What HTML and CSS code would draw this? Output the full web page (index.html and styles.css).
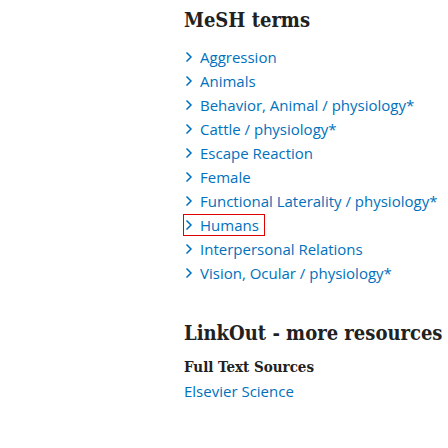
FILE: index.html
```html
<!DOCTYPE html>
<html>
<head>
<meta charset="utf-8">
<link rel="stylesheet" href="styles.css">
</head>
<body>
<div class="page">
  <section class="mesh">
    <h2 class="heading">MeSH terms</h2>
    <ul class="terms">
      <li class="term"><span class="chev"><svg width="8" height="12" viewBox="0 0 8 12"><path d="M1.5 1.5 L6 6 L1.5 10.5" fill="none" stroke="#0071bc" stroke-width="1.5"/></svg></span><a class="link">Aggression</a></li>
      <li class="term"><span class="chev"><svg width="8" height="12" viewBox="0 0 8 12"><path d="M1.5 1.5 L6 6 L1.5 10.5" fill="none" stroke="#0071bc" stroke-width="1.5"/></svg></span><a class="link">Animals</a></li>
      <li class="term"><span class="chev"><svg width="8" height="12" viewBox="0 0 8 12"><path d="M1.5 1.5 L6 6 L1.5 10.5" fill="none" stroke="#0071bc" stroke-width="1.5"/></svg></span><a class="link">Behavior, Animal / physiology*</a></li>
      <li class="term"><span class="chev"><svg width="8" height="12" viewBox="0 0 8 12"><path d="M1.5 1.5 L6 6 L1.5 10.5" fill="none" stroke="#0071bc" stroke-width="1.5"/></svg></span><a class="link">Cattle / physiology*</a></li>
      <li class="term"><span class="chev"><svg width="8" height="12" viewBox="0 0 8 12"><path d="M1.5 1.5 L6 6 L1.5 10.5" fill="none" stroke="#0071bc" stroke-width="1.5"/></svg></span><a class="link">Escape Reaction</a></li>
      <li class="term"><span class="chev"><svg width="8" height="12" viewBox="0 0 8 12"><path d="M1.5 1.5 L6 6 L1.5 10.5" fill="none" stroke="#0071bc" stroke-width="1.5"/></svg></span><a class="link">Female</a></li>
      <li class="term"><span class="chev"><svg width="8" height="12" viewBox="0 0 8 12"><path d="M1.5 1.5 L6 6 L1.5 10.5" fill="none" stroke="#0071bc" stroke-width="1.5"/></svg></span><a class="link">Functional Laterality / physiology*</a></li>
      <li class="term focused"><span class="chev"><svg width="8" height="12" viewBox="0 0 8 12"><path d="M1.5 1.5 L6 6 L1.5 10.5" fill="none" stroke="#0071bc" stroke-width="1.5"/></svg></span><a class="link">Humans</a></li>
      <li class="term"><span class="chev"><svg width="8" height="12" viewBox="0 0 8 12"><path d="M1.5 1.5 L6 6 L1.5 10.5" fill="none" stroke="#0071bc" stroke-width="1.5"/></svg></span><a class="link">Interpersonal Relations</a></li>
      <li class="term"><span class="chev"><svg width="8" height="12" viewBox="0 0 8 12"><path d="M1.5 1.5 L6 6 L1.5 10.5" fill="none" stroke="#0071bc" stroke-width="1.5"/></svg></span><a class="link">Vision, Ocular / physiology*</a></li>
    </ul>
  </section>
  <section class="linkout">
    <h2 class="heading">LinkOut - more resources</h2>
    <h3 class="subheading">Full Text Sources</h3>
    <a class="link">Elsevier Science</a>
  </section>
</div>
</body>
</html>
```
FILE: styles.css
```css
html, body {
  margin: 0;
  padding: 0;
  background: #fff;
  overflow: hidden;
}
.page {
  padding: 8px 0 0 184px;
  width: 400px;
  font-family: "Open Sans", "Noto Sans", sans-serif;
  font-size: 15px;
  color: #212121;
}
.heading {
  font-family: "DejaVu Serif Condensed", "DejaVu Serif", serif;
  font-stretch: condensed;
  font-weight: bold;
  font-size: 20px;
  line-height: 24px;
  margin: 0;
  white-space: nowrap;
  color: #212121;
}
.terms {
  list-style: none;
  margin: 13px 0 0 0;
  padding: 0;
}
.term {
  display: flex;
  align-items: center;
  height: 24px;
}
.chev {
  display: flex;
  width: 16px;
  padding-left: 1px;
  box-sizing: border-box;
}
.link {
  color: #0071bc;
  text-decoration: none;
  line-height: 20px;
}
.focused {
  width: max-content;
  height: 20px;
  margin: 2px 0;
  padding-right: 5px;
  outline: 1px solid #e00000;
}
.linkout {
  margin-top: 36px;
}
.subheading {
  font-family: "DejaVu Serif Condensed", "DejaVu Serif", serif;
  font-stretch: condensed;
  font-weight: bold;
  font-size: 15px;
  line-height: 20px;
  margin: 12px 0 4px 0;
}
```
